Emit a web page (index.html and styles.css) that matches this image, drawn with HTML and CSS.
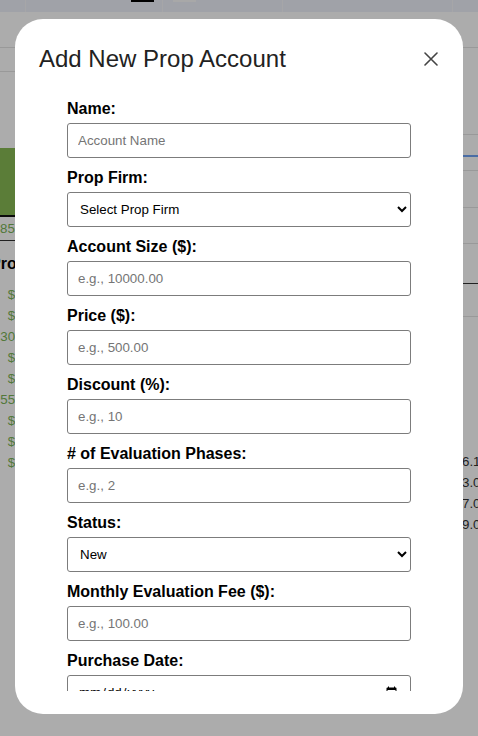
FILE: index.html
```html
<!DOCTYPE html>
<html lang="en-GB">
<head>
<meta charset="utf-8">
<title>Add New Prop Account</title>
<link rel="stylesheet" href="styles.css">
</head>
<body>
<div class="app">
  <header class="topbar">
    <div class="tab tab-a"></div>
    <div class="tab tab-b"><span class="tab-mark dark"></span></div>
    <div class="tab tab-c"><span class="tab-mark light"></span></div>
    <div class="tab tab-d"></div>
    <div class="tab tab-e"></div>
  </header>
  <main class="dashboard">
    <section class="left-panel">
      <div class="lp-toolbar"></div>
      <div class="lp-sub"></div>
      <div class="lp-spacer"></div>
      <div class="lp-bar"></div>
      <div class="lp-total">850.00</div>
      <div class="lp-head">Profit</div>
      <ul class="lp-rows">
        <li>$0.00</li>
        <li>$0.00</li>
        <li>300.00</li>
        <li>$0.00</li>
        <li>$0.00</li>
        <li>550.00</li>
        <li>$0.00</li>
        <li>$0.00</li>
        <li>$0.00</li>
      </ul>
    </section>
    <section class="right-panel">
      <div class="rp r1"></div>
      <div class="rp r2"></div>
      <div class="rp r3"></div>
      <div class="rp r4"></div>
      <div class="rp r5"></div>
      <div class="rp r6"></div>
      <div class="rp r7"></div>
      <div class="rp r8"></div>
      <div class="rp-spacer"></div>
      <ul class="rp-rows">
        <li>6.12</li>
        <li>3.00</li>
        <li>7.00</li>
        <li>9.00</li>
      </ul>
    </section>
  </main>
</div>

<div class="overlay">
  <div class="modal" role="dialog" aria-labelledby="modal-title">
    <div class="modal-header">
      <h2 class="modal-title" id="modal-title">Add New Prop Account</h2>
      <button class="close-btn" type="button" aria-label="Close">
        <svg viewBox="0 0 14 14" width="14" height="14" aria-hidden="true">
          <path d="M1 1 L13 13 M13 1 L1 13" stroke="#444" stroke-width="1.6" stroke-linecap="round" fill="none"/>
        </svg>
      </button>
    </div>
    <div class="modal-body">
      <form class="account-form">
        <div class="field">
          <label for="name">Name:</label>
          <input id="name" type="text" placeholder="Account Name">
        </div>
        <div class="field">
          <label for="firm">Prop Firm:</label>
          <select id="firm">
            <option>Select Prop Firm</option>
          </select>
        </div>
        <div class="field">
          <label for="size">Account Size ($):</label>
          <input id="size" type="text" placeholder="e.g., 10000.00">
        </div>
        <div class="field">
          <label for="price">Price ($):</label>
          <input id="price" type="text" placeholder="e.g., 500.00">
        </div>
        <div class="field">
          <label for="discount">Discount (%):</label>
          <input id="discount" type="text" placeholder="e.g., 10">
        </div>
        <div class="field">
          <label for="phases"># of Evaluation Phases:</label>
          <input id="phases" type="text" placeholder="e.g., 2">
        </div>
        <div class="field">
          <label for="status">Status:</label>
          <select id="status">
            <option>New</option>
          </select>
        </div>
        <div class="field">
          <label for="fee">Monthly Evaluation Fee ($):</label>
          <input id="fee" type="text" placeholder="e.g., 100.00">
        </div>
        <div class="field">
          <label for="date">Purchase Date:</label>
          <input id="date" type="date" lang="en-GB">
        </div>
        <div class="field">
          <label for="notes">Notes:</label>
          <input id="notes" type="text" placeholder="Optional">
        </div>
      </form>
    </div>
  </div>
</div>
</body>
</html>
```

FILE: styles.css
```css
* { box-sizing: border-box; }

html, body {
  margin: 0;
  padding: 0;
}

body {
  font-family: "Liberation Sans", Arial, sans-serif;
  background: #ffffff;
  width: 478px;
  height: 736px;
  overflow: hidden;
}

/* ---------- background page ---------- */
.topbar {
  display: flex;
  height: 12px;
  background: #edf1fa;
}
.tab {
  height: 12px;
  border-left: 1px solid #f6f7fa;
  display: flex;
  align-items: flex-start;
}
.tab-a { width: 25px; border-left: none; }
.tab-b { width: 137px; justify-content: flex-end; padding-right: 8px; }
.tab-c { width: 120px; padding-left: 10px; }
.tab-d { width: 170px; }
.tab-e { flex: 1; }
.tab-mark { display: block; width: 23px; height: 2px; }
.tab-mark.dark { background: #000; }
.tab-mark.light { background: #fafafa; }

.dashboard {
  display: flex;
  justify-content: space-between;
}

.left-panel {
  width: 60px;
  font-size: 13.333px;
}
.lp-toolbar { height: 36px; border-bottom: 1px solid #e3e3e3; }
.lp-sub { height: 24px; border-bottom: 1px solid #e3e3e3; }
.lp-spacer { height: 76px; }
.lp-bar { height: 69px; background: #88b953; border-bottom: 2px solid #111; }
.lp-total {
  height: 24px;
  line-height: 23px;
  color: #7ab356;
  border-bottom: 1px solid #333;
}
.lp-head {
  height: 43px;
  line-height: 46px;
  font-weight: bold;
  font-size: 16px;
  color: #000;
  margin-left: -10px;
}
.lp-rows {
  list-style: none;
  margin: 0;
  padding: 0;
  width: 41px;
  text-align: right;
  color: #7ab356;
}
.lp-rows li { line-height: 21px; height: 21px; }

.right-panel {
  width: 38px;
  font-size: 13.333px;
  color: #333;
}
.rp { border-bottom: 1px solid #e3e3e3; }
.r1 { height: 36px; }
.r2 { height: 87px; }
.r3 { height: 22px; border-bottom: 2px solid #6ea2f5; }
.r4 { height: 14px; }
.r5 { height: 37px; }
.r6 { height: 36px; }
.r7 { height: 40px; border-bottom-color: #333; }
.r8 { height: 33px; }
.rp-spacer { height: 134px; }
.rp-rows {
  list-style: none;
  margin: 0;
  padding: 0 0 0 22px;
}
.rp-rows li { line-height: 21px; height: 21px; white-space: nowrap; }

/* ---------- overlay & modal ---------- */
.overlay {
  position: fixed;
  inset: 0;
  background: rgba(0, 0, 0, 0.325);
  display: flex;
  justify-content: center;
  align-items: flex-start;
}

.modal {
  margin-top: 19px;
  width: 448px;
  height: 695px;
  background: #ffffff;
  border-radius: 28px;
  padding: 25px 24px 23px;
  display: flex;
  flex-direction: column;
}

.modal-header {
  display: flex;
  align-items: center;
  justify-content: space-between;
  margin-bottom: 26px;
}

.modal-title {
  margin: 0;
  font-size: 24px;
  line-height: 30px;
  font-weight: normal;
  color: #222;
}

.close-btn {
  width: 16px;
  height: 16px;
  padding: 0;
  border: none;
  background: transparent;
  display: flex;
  align-items: center;
  justify-content: center;
  cursor: pointer;
}

.modal-body {
  flex: 1;
  min-height: 0;
  overflow-y: auto;
  scrollbar-width: none;
}

.account-form {
  padding: 0 28px;
}

.field {
  margin-bottom: 11px;
}

.field label {
  display: block;
  font-size: 16px;
  line-height: 18px;
  font-weight: bold;
  color: #000;
  margin-bottom: 5px;
}

.field input,
.field select {
  display: block;
  width: 100%;
  height: 35px;
  padding: 0 10px;
  border: 1px solid #7c7c7c;
  border-radius: 3px;
  background: #fff;
  font-family: "Liberation Sans", Arial, sans-serif;
  font-size: 13.333px;
  color: #000;
}

.field select {
  padding-left: 8px;
}

.field input::placeholder {
  color: #757575;
}
```
